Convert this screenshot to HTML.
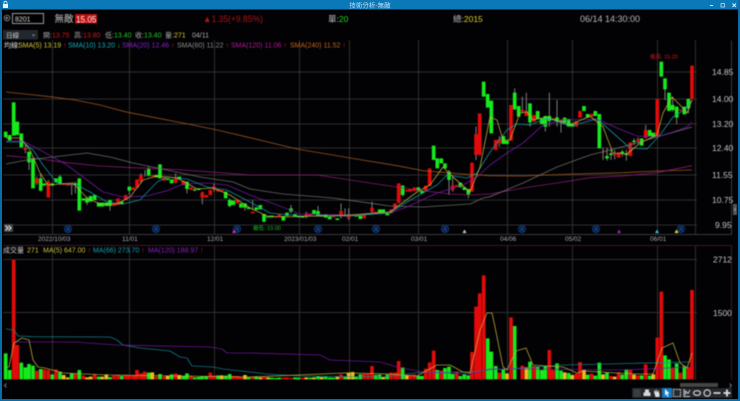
<!DOCTYPE html>
<html><head><meta charset="utf-8"><style>
html,body{margin:0;padding:0;background:#000;width:740px;height:401px;overflow:hidden}
svg{display:block}
.blur{filter:blur(.4px)}
text{font-family:"Liberation Sans","Noto Sans CJK TC",sans-serif}
.g{stroke:#14ea1c;stroke-width:11;fill:none}
.r{stroke:#e20a0a;stroke-width:11;fill:none}
.y{stroke:#ecbc20;stroke-width:11;fill:none}
.w{stroke:#7d7d7d;stroke-width:3;fill:none}
.l{fill:none;stroke-width:.85;stroke-linejoin:round;stroke-opacity:.85}
.ax{font-size:8.5px;fill:#c4c4c4}
.dt{font-size:6.5px;fill:#a8a8a8}
.hd{font-size:7px}
.mk{fill:#020a20;stroke:#0a3c88;stroke-width:1.1}
.mt{font-size:4.5px;fill:#3a80d0;text-anchor:middle}
</style></head><body>
<svg width="740" height="401" viewBox="0 0 740 401" xmlns="http://www.w3.org/2000/svg">
<rect width="740" height="401" fill="#020204"/>
<g class="blur">
<!-- grid -->
<path d="M3 72H697M3 99H697M3 124H697M3 148H697M3 175H697M3 200H697M3 225H697M3 259.5H697M3 312.5H697M52.5 40V234M129.5 40V234M214.5 40V234M299.5 40V234M349.5 40V234M418.5 40V234M507.5 40V234M572.5 40V234M657.5 40V234M695.5 40V234M52.5 245V380M129.5 245V380M214.5 245V380M299.5 245V380M349.5 245V380M418.5 245V380M507.5 245V380M572.5 245V380M657.5 245V380M695.5 245V380" stroke="#303030" fill="none"/>
<path d="M3 234.5H731.5V40.500" stroke="#3a3a3a" fill="none"/>
<path d="M3 245.500H731.5V380" stroke="#3d1826" fill="none"/>
<!-- candles: left -->
<g transform="translate(0,70) scale(.33333)">
<path class="w" d="M76 225V250M87 245V300M110 320V345M122 310V365M145 330V345M180 315V345M215 345V375M226 335V370M261 380V405M330 395V422M388 350V375M423 310V340M435 300V320M446 290V320M527 310V340M561 335V370M584 355V365M607 365V403M642 340V365M689 385V412M735 400V422"/>
<path class="g" d="M17 185V202M29 195V212M41 97V197M52 155V195M64 190V232M87 245V277M99 265V355M122 325V362M133 340V347M157 340V347M168 325V337M180 320V340M226 340V345M238 325V422M250 385V392M261 385V398M272 378V395M284 375V390M296 398V410M307 398V410M319 398V408M330 390V408M365 395V403M388 350V362M446 297V317M469 315V322M480 283V325M503 325V330M515 328V340M538 320V328M561 335V357M584 358V361M596 355V360M677 365V385M689 390V408M700 392V405M723 400V413M735 400V413M746 412V417"/>
<path class="r" d="M76 235V240M110 325V340M145 335V383M191 340V345M203 340V347M215 340V347M342 400V408M354 385V405M377 375V390M400 352V360M411 328V353M423 315V335M458 315V320M492 322V332M527 325V338M550 332V345M573 352V360M607 367V383M619 375V383M631 360V375M642 350V358M654 358V365M665 360V364M712 390V400"/>
</g>
<!-- candles: middle -->
<g transform="translate(250,70) scale(.33333)">
<path class="w" d="M8 390V420M42 432V458M123 405V430M169 425V445M204 408V440M273 400V445M285 415V440M296 415V450M366 395V430M446 340V400M458 345V380M597 300V375M608 320V365M655 357V385M678 170V270"/>
<path class="g" d="M19 412V420M31 405V418M42 432V455M54 440V443M65 437V442M100 438V452M111 428V438M123 415V425M135 432V440M146 438V442M158 438V443M192 420V432M204 423V437M215 435V440M227 433V443M239 440V448M262 445V450M319 437V440M331 437V447M389 418V428M400 418V428M412 428V436M458 347V375M505 352V362M516 362V370M551 227V270M562 265V295M574 265V280M585 280V295M597 305V330M631 338V352M643 352V360M655 357V373M701 35V80M713 72V113M724 92V190"/>
<path class="r" d="M8 425V430M77 440V443M88 433V441M169 430V440M181 430V436M250 440V443M273 423V440M285 435V438M296 435V445M308 433V437M342 435V445M354 430V433M366 413V425M377 425V428M423 418V430M435 400V415M446 340V398M470 360V365M481 357V365M493 352V363M527 347V362M539 295V348M608 347V360M620 345V350M666 278V365M678 192V255M689 130V255"/>
</g>
<!-- candles: right -->
<g transform="translate(490,50) scale(.33333)">
<path class="w" d="M74 115V180M97 140V190M109 128V195M178 128V230M201 150V230M213 210V248M166 198V245M339 292V330M351 293V332M363 300V330M374 300V328M397 300V320M409 300V332M432 265V285M444 262V280M467 225V265M525 85V150M548 140V185M560 170V222M595 145V190M28 258V290M120 160V230"/>
<path class="g" d="M40 258V282M51 272V282M74 128V178M86 168V200M120 160V217M143 183V207M155 205V222M166 198V230M178 198V213M201 202V215M213 210V215M224 203V218M236 207V230M247 220V230M282 168V183M293 192V203M316 183V198M328 192V295M351 318V325M363 310V315M397 305V310M409 310V315M432 272V276M455 265V287M479 240V258M490 248V260M514 35V80M525 85V118M537 128V183M548 165V180M560 170V203M583 170V193M595 147V175"/>
<path class="r" d="M17 270V300M28 268V280M63 165V272M97 180V185M109 183V198M132 195V215M189 205V210M213 208V212M259 213V230M270 183V203M305 192V200M339 305V308M374 312V316M386 307V323M421 277V318M444 268V273M467 240V263M502 147V260M571 178V182M606 47V147"/>
</g>
<!-- MA lines on price -->
<polyline class="l" stroke="#b85e1c" points="6,92 25,94 50,96.700 75,100 100,105 125,111.700 150,116.700 183,123 217,130 250,137.700 297,149 350,158 397,165.700 423,170.700 463,174 490,175.700 523,176 573,174 623,172.700 657,171 692,170"/>
<polyline class="l" stroke="#a01c86" points="6,155.700 33,158 67,162.700 100,166 133,167.700 167,169 207,171.700 250,175 317,175 350,180 383,185 417,190 450,194 470,195 490,194 523,188 557,183 590,177.700 623,176 657,172.700 692,165.700"/>
<polyline class="l" stroke="#7a7a72" points="6,164 27,160 53,157 87,153 110,157 133,163 167,170 200,177 233,182 250,189 283,194 333,198 390,206 423,207 470,204 483,198 490,196.700 523,183 557,167 590,155 623,146.700 657,137 692,127"/>
<polyline class="l" stroke="#7e1cb4" points="6,141 23,141 40,150 67,165 87,180 103,192 123,197 147,196 167,190.700 183,184 207,183 227,185 250,195 277,205 300,214 350,215 390,213 407,207 437,193 463,185 477,177 490,165 507,153 523,143 543,125 563,120 597,119 617,128 637,136 657,137 673,132 687,127 692,122"/>
<polyline class="l" stroke="#18a0b0" points="6,142 23,142 33,150 43,165 57,183 77,185 90,192 107,202 123,204 140,200 157,182 167,177 187,179 207,187 227,190 250,202 270,213 300,216 350,216 390,213 407,202 437,185 447,175 467,178 477,173 490,152 507,130 517,124 530,125 547,118 570,126 597,119 613,133 630,148 647,149 660,135 673,117 687,108 692,100"/>
<polyline class="l" stroke="#d0b83c" points="6,138 20,138 30,150 40,173 48,185 73,183 87,198 100,204 117,204 130,197 143,180 157,176 177,178 197,189 213,188 230,195 250,208 267,216 283,217 350,215 390,212 417,192 430,185 443,167 453,177 470,192 480,167 490,117 497,120 503,140 510,140 520,113 527,112 533,120 547,117 570,125 590,116 603,127 613,153 627,154 640,143 657,135 663,113 672,97 680,105 687,113 692,100"/>
<!-- volume bars -->
<g transform="translate(0,230) scale(.33333)">
<path class="g" d="M17 448V370M29 448V420M64 448V398M76 448V412M87 448V402M99 448V407M122 448V417M157 448V433M180 448V425M215 448V430M238 448V420M296 448V440M330 448V441M365 448V438M446 448V428M480 448V432M515 448V433M550 448V438M561 448V430M584 448V442M596 448V441M607 448V438M619 448V438M654 448V436M677 448V437M689 448V432M746 448V442"/>
<path class="r" d="M41 448V90M52 448V345M110 448V422M133 448V418M145 448V420M168 448V418M226 448V432M250 448V437M284 448V432M342 448V437M354 448V435M377 448V435M388 448V435M400 448V435M411 448V420M423 448V430M434 448V425M469 448V440M492 448V440M527 448V430M573 448V437M631 448V428M642 448V437M700 448V438M712 448V438M723 448V441"/>
<path class="y" d="M191 448V435M203 448V442M261 448V442M272 448V440M307 448V440M319 448V433M457 448V427M503 448V437M538 448V435M665 448V436M735 448V435"/>
</g>
<g transform="translate(250,230) scale(.33333)">
<path class="g" d="M19 448V439M65 448V443M77 448V444M88 448V443M135 448V442M146 448V443M181 448V443M204 448V438M227 448V440M239 448V442M250 448V443M285 448V440M319 448V440M331 448V433M377 448V435M389 448V434M412 448V434M458 448V412M505 448V438M516 448V438M562 448V420M585 448V414M597 448V410M608 448V432M631 448V438M643 448V433M655 448V436M713 448V325M724 448V365"/>
<path class="r" d="M8 448V440M42 448V441M100 448V443M111 448V442M123 448V444M158 448V443M273 448V433M342 448V432M354 448V432M366 448V408M423 448V428M435 448V428M446 448V393M481 448V435M493 448V434M527 448V416M539 448V397M551 448V362M574 448V422M620 448V426M666 448V366M678 448V230M689 448V190M701 448V136"/>
<path class="y" d="M31 448V442M54 448V442M169 448V442M192 448V442M215 448V441M262 448V440M296 448V428M308 448V426M400 448V441M470 448V436"/>
</g>
<g transform="translate(490,230) scale(.33333)">
<path class="g" d="M17 448V408M40 448V418M74 448V288M120 448V395M143 448V410M155 448V420M166 448V408M201 448V400M213 448V422M236 448V429M293 448V434M316 448V437M328 448V398M351 448V428M397 448V434M409 448V418M455 448V436M479 448V437M525 448V376M537 448V388M560 448V400M583 448V408"/>
<path class="r" d="M28 448V428M63 448V262M97 448V407M132 448V408M178 448V360M189 448V420M259 448V431M270 448V396M305 448V431M363 448V438M386 448V427M421 448V420M444 448V436M467 448V403M502 448V323M514 448V185M548 448V414M571 448V428M595 448V413M606 448V180"/>
<path class="y" d="M51 448V430M109 448V412M224 448V427M247 448V435M282 448V420M339 448V433M374 448V440M432 448V434M490 448V433"/>
</g>
<!-- volume lines -->
<polyline class="l" stroke="#158a9a" points="6,329 14,330 18,336 33,336.700 110,337 117,340 123,345 140,348 170,351 180,357 187,358 192,366 213,367 223,369 250,372 267,374 300,376 383,377 423,372 470,372 490,370 523,368 563,365 690,362"/>
<polyline class="l" stroke="#7a18a8" points="13,342 77,342 87,343 117,345 210,347 222,349 227,353 250,353 320,355 330,360 380,362 397,367 423,372 470,374 490,369 523,369 623,370 690,367"/>
<polyline class="l" stroke="#c8b83c" points="6,367 9,367 14,343 22,338 29,340 33,360 38,367 45,368 63,373 107,375 250,377 345,373 390,374 417,376 437,365 450,365 463,372 470,373 480,330 487,313 492,313 495,327 503,367 507,370 516,351 526,348 533,365 547,366 563,367 577,373 583,371 617,373 637,374 653,374 662,348 673,343 680,363 687,368 692,353"/>
<!-- markers -->
<g class="mk"><circle cx="68" cy="229" r="3.500"/><circle cx="156" cy="229" r="3.500"/><circle cx="237" cy="229" r="3.500"/><circle cx="318" cy="229" r="3.500"/><circle cx="376" cy="229" r="3.500"/><circle cx="445" cy="229" r="3.500"/><circle cx="522" cy="229" r="3.500"/><circle cx="596" cy="229" r="3.500"/><circle cx="681" cy="229" r="3.500"/></g>
<g class="mt"><text x="68" y="231">月</text><text x="156" y="231">月</text><text x="237" y="231">月</text><text x="318" y="231">月</text><text x="376" y="231">月</text><text x="445" y="231">月</text><text x="522" y="231">月</text><text x="596" y="231">月</text><text x="681" y="231">月</text></g>
<path d="M232 233L234 229.500L236 233Z" fill="#d02ad0"/>
<path d="M462.500 233L464.500 229.500L466.500 233Z" fill="#ccc"/>
<path d="M617 233L619 229.500L621 233Z" fill="#b020c8"/>
<path d="M655 233L657 229.500L659 233Z" fill="#30c0e0"/>
<path d="M674.500 233L676.500 229.500L678.500 233Z" fill="#e8e040"/>
<rect x="4" y="224" width="9" height="8" fill="#444"/>
<path d="M5.500 225.500L8 228L5.500 230.500M8.500 225.500L11 228L8.500 230.500" fill="none" stroke="#eee" stroke-width="1"/>
<text x="253" y="230" font-size="5.500" fill="#19c020">最低: 10.00</text>
<text x="650" y="58.500" font-size="5.500" fill="#c81818">最高: 15.20</text>
<!-- axis -->
<g class="ax"><text x="712" y="75">14.85</text><text x="712" y="102">14.00</text><text x="712" y="127">13.20</text><text x="712" y="151">12.40</text><text x="712" y="178">11.55</text><text x="712" y="203">10.75</text><text x="715" y="228">9.95</text><text x="713" y="262.500">2712</text><text x="713" y="316">1500</text></g>
<g class="dt"><text x="38" y="241">2022/10/03</text><text x="122" y="241">11/01</text><text x="207" y="241">12/01</text><text x="284" y="241">2023/01/03</text><text x="342" y="241">02/01</text><text x="411" y="241">03/01</text><text x="500" y="241">04/06</text><text x="565" y="241">05/02</text><text x="650" y="241">06/01</text></g>
<!-- header rows -->
<circle cx="7" cy="18" r="2.800" fill="none" stroke="#aaa" stroke-width=".7"/><path d="M6 16.500L8.500 18L6 19.500Z" fill="#aaa"/>
<rect x="12.500" y="13.500" width="31" height="10" fill="#000" stroke="#9a9a9a"/>
<text x="15" y="21.300" font-size="7" fill="#ddd">8201</text>
<text x="54.500" y="22" font-size="9.500" fill="#c8c8c8">無敵</text>
<rect x="75" y="14" width="22" height="9.500" fill="#c00c0c"/>
<text x="76" y="22.300" font-size="9" fill="#f4f4f4" textLength="20.500" lengthAdjust="spacingAndGlyphs">15.05</text>
<text x="203" y="22" font-size="9.500" fill="#a81616" textLength="60" lengthAdjust="spacingAndGlyphs">▲1.35(+9.85%)</text>
<text x="328" y="22" font-size="8.500" fill="#bbb">單:<tspan fill="#1ee01e">20</tspan></text>
<text x="453" y="22" font-size="8.500" fill="#bbb">總:<tspan fill="#e0d030">2015</tspan></text>
<text x="580" y="22" font-size="9" fill="#b8b8b8">06/14 14:30:00</text>
<rect x="3" y="30" width="35" height="9.500" fill="#23282e"/>
<text x="6" y="37.500" font-size="6.500" fill="#ccc">日線</text>
<path d="M32 34.500H35L33.500 36.500Z" fill="#888"/>
<g class="hd">
<text x="43" y="37.500" fill="#aaa">開:<tspan fill="#d01818">13.75</tspan></text>
<text x="74" y="37.500" fill="#aaa">高:<tspan fill="#d01818">13.80</tspan></text>
<text x="105" y="37.500" fill="#aaa">低:<tspan fill="#20d020">13.40</tspan></text>
<text x="135" y="37.500" fill="#aaa">收:<tspan fill="#20d020">13.40</tspan></text>
<text x="165" y="37.500" fill="#aaa">量:<tspan fill="#e0d030">271</tspan></text>
<text x="192" y="37.500" fill="#b0b0b0">04/11</text>
<text x="4" y="47.500" fill="#ddd">均線:</text>
<text x="18" y="47.500" fill="#d8c838">SMA(5) 13.19 <tspan fill="#d02020">↑</tspan></text>
<text x="68" y="47.500" fill="#18a8b8">SMA(10) 13.20 <tspan fill="#20c020">↓</tspan></text>
<text x="122" y="47.500" fill="#8a20c8">SMA(20) 12.46 <tspan fill="#d02020">↑</tspan></text>
<text x="177" y="47.500" fill="#8c8c8c">SMA(60) 11.22 <tspan fill="#d02020">↑</tspan></text>
<text x="231" y="47.500" fill="#b01c90">SMA(120) 11.06 <tspan fill="#d02020">↑</tspan></text>
<text x="290" y="47.500" fill="#c4661e">SMA(240) 11.52 <tspan fill="#d02020">↑</tspan></text>
<text x="3" y="252.500" fill="#ccc">成交量</text>
<text x="27" y="252.500" fill="#d8c838">271</text>
<text x="43" y="252.500" fill="#c8c038">MA(5) 647.00 <tspan fill="#d02020">↑</tspan></text>
<text x="93" y="252.500" fill="#18a0b0">MA(66) 273.70 <tspan fill="#d02020">↑</tspan></text>
<text x="148" y="252.500" fill="#8a20c0">MA(120) 188.97 <tspan fill="#d02020">↑</tspan></text>
</g>
<!-- scroll -->
<rect x="680" y="383" width="38" height="4" fill="#454545"/>
<path d="M6.500 383.500L4.500 385.500L6.500 387.500" fill="none" stroke="#999" stroke-width=".8"/>
<path d="M729.500 383.500L731.500 385.500L729.500 387.500" fill="none" stroke="#999" stroke-width=".8"/>
<rect x="733" y="204" width="4" height="11" fill="#555"/>
<path d="M735.500 208L734.500 209.500L735.500 211" fill="none" stroke="#ccc" stroke-width=".6"/>
<!-- toolbar -->
<rect x="632" y="388" width="100" height="10" fill="#24272b"/>
<rect x="662" y="388" width="10" height="10" fill="#1278c4"/>
<rect x="633.500" y="389" width="7" height="8" fill="#3a3d41"/>
<path d="M643.500 392.500H650.500V396H643.500ZM645 389.500H649V392.500H645Z" fill="#d8d8d8"/>
<path d="M654 392L655 389.500L655.700 392.500L656.500 388.800L657.300 392.500L658.500 390L659.500 394V397H655.500Z" fill="#e0e0e0"/>
<path d="M665 389V395.500L666.500 394.200L667.500 396.800L668.700 396.200L667.500 393.800L669.500 393.500Z" fill="#f4f4f4"/>
<rect x="673.500" y="389.500" width="7" height="7" fill="none" stroke="#c8c8c8" stroke-width="1.100" stroke-dasharray="1.500 .8"/>
<path d="M684 389V396.500H690M685.500 395V391L688 393.500L690 390" fill="none" stroke="#c8c8c8" stroke-width="1"/>
<ellipse cx="697" cy="393" rx="3.500" ry="2.300" fill="none" stroke="#e0e0e0" stroke-width="1.100"/>
<path d="M704 393A3.200 3.200 0 1 1 707.200 396.200A3.200 3.200 0 0 1 704 393" fill="none" stroke="#e0e0e0" stroke-width="1.100"/>
<path d="M713.500 393H720.500" stroke="#d0d0d0" stroke-width="1.800"/>
<path d="M723.500 393H730.500M727 389.500V396.500" stroke="#e0e0e0" stroke-width="1.800"/>
</g>
<!-- window chrome -->
<rect x="0" y="0" width="740" height="9.500" fill="#0b78b8"/>
<rect x="0" y="0" width="2" height="401" fill="#0b6ca8"/>
<rect x="738" y="0" width="2" height="401" fill="#0b6ca8"/>
<rect x="0" y="399" width="740" height="2" fill="#0b6ca8"/>
<rect x="3" y="4" width="5" height="4" fill="#e8f4fc"/><path d="M4 4V2.800A1.500 1.500 0 0 1 7 2.800V4" fill="none" stroke="#e8f4fc" stroke-width=".8"/>
<text x="370" y="7.500" font-size="6.500" fill="#bfe0f4" text-anchor="middle">技術分析-無敵</text>
<path d="M710 5.500H713" stroke="#d0e8f8"/>
<rect x="721" y="3.500" width="3.500" height="3.500" fill="none" stroke="#d0e8f8" stroke-width=".7"/>
<path d="M732.500 3.500L736 7M736 3.500L732.500 7" stroke="#e8f4fc" stroke-width=".9"/>
</svg>
</body></html>
